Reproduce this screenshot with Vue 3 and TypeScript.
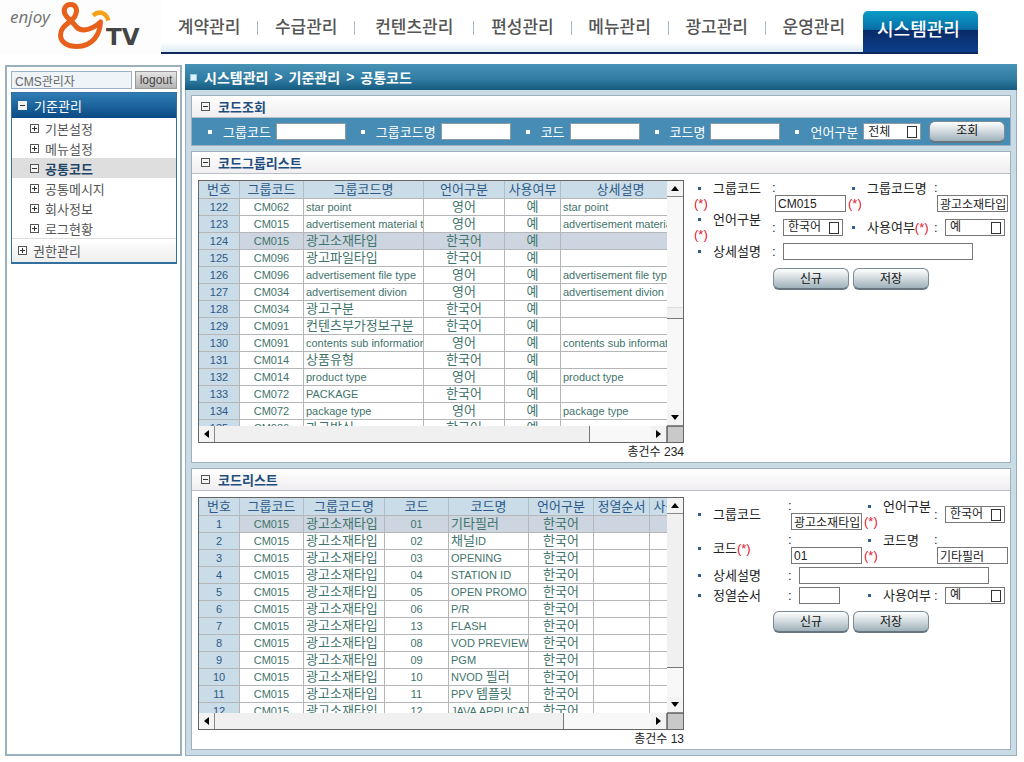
<script setup lang="ts">
import { reactive, ref } from 'vue'

interface Column { title: string; width: number; align: 'center' | 'left' }
interface Grid { columns: Column[]; rows: string[][]; selected: number }

const menus = ['계약관리', '수급관리', '컨텐츠관리', '편성관리', '메뉴관리', '광고관리', '운영관리', '시스템관리']
const sideItems = ['기본설정', '메뉴설정', '공통코드', '공통메시지', '회사정보', '로그현황']
const path = ['시스템관리', '기준관리', '공통코드']
const user = ref('CMS관리자')

const searchFields = reactive([
  { id: 's-group', label: '그룹코드', value: '' },
  { id: 's-group-name', label: '그룹코드명', value: '' },
  { id: 's-code', label: '코드', value: '' },
  { id: 's-code-name', label: '코드명', value: '' },
])

const groupForm = reactive({ code: 'CM015', name: '광고소재타입', desc: '' })
const codeForm = reactive({ group: '광고소재타입', code: '01', name: '기타필러', desc: '', order: '' })

const groups: Grid = {
  selected: 2,
  columns: [
    { title: '번호', width: 41, align: 'center' },
    { title: '그룹코드', width: 64, align: 'center' },
    { title: '그룹코드명', width: 120, align: 'left' },
    { title: '언어구분', width: 81, align: 'center' },
    { title: '사용여부', width: 56, align: 'center' },
    { title: '상세설명', width: 120, align: 'left' },
  ],
  rows: [
    ['122', 'CM062', 'star point', '영어', '예', 'star point'],
    ['123', 'CM015', 'advertisement material type', '영어', '예', 'advertisement material type'],
    ['124', 'CM015', '광고소재타입', '한국어', '예', ''],
    ['125', 'CM096', '광고파일타입', '한국어', '예', ''],
    ['126', 'CM096', 'advertisement file type', '영어', '예', 'advertisement file type'],
    ['127', 'CM034', 'advertisement divion', '영어', '예', 'advertisement divion'],
    ['128', 'CM034', '광고구분', '한국어', '예', ''],
    ['129', 'CM091', '컨텐츠부가정보구분', '한국어', '예', ''],
    ['130', 'CM091', 'contents sub information', '영어', '예', 'contents sub information'],
    ['131', 'CM014', '상품유형', '한국어', '예', ''],
    ['132', 'CM014', 'product type', '영어', '예', 'product type'],
    ['133', 'CM072', 'PACKAGE', '한국어', '예', ''],
    ['134', 'CM072', 'package type', '영어', '예', 'package type'],
    ['135', 'CM086', '과금방식', '한국어', '예', ''],
  ],
}

const codeNames: [string, string][] = [
  ['01', '기타필러'], ['02', '채널ID'], ['03', 'OPENING'], ['04', 'STATION ID'],
  ['05', 'OPEN PROMO'], ['06', 'P/R'], ['13', 'FLASH'], ['08', 'VOD PREVIEW'],
  ['09', 'PGM'], ['10', 'NVOD 필러'], ['11', 'PPV 템플릿'], ['12', 'JAVA APPLICATION'],
]
const codes: Grid = {
  selected: 0,
  columns: [
    { title: '번호', width: 41, align: 'center' },
    { title: '그룹코드', width: 64, align: 'center' },
    { title: '그룹코드명', width: 81, align: 'left' },
    { title: '코드', width: 64, align: 'center' },
    { title: '코드명', width: 80, align: 'left' },
    { title: '언어구분', width: 65, align: 'center' },
    { title: '정열순서', width: 56, align: 'center' },
    { title: '사용여부', width: 56, align: 'center' },
  ],
  rows: codeNames.map(([code, name], i) => [String(i + 1), 'CM015', '광고소재타입', code, name, '한국어', '', '']),
}

const lists = [
  { key: 'group', title: '코드그룹리스트', grid: groups, total: 234 },
  { key: 'code', title: '코드리스트', grid: codes, total: 13 },
]

// Hangul runs are set a little larger than Latin runs inside grid cells.
function runs(text: string): { text: string; ko: boolean }[] {
  return (text.match(/[가-힣]+|[^가-힣]+/g) ?? []).map(t => ({ text: t, ko: /[가-힣]/.test(t) }))
}
</script>

<template>
  <div class="page">
    <header class="top">
      <a class="logo" href="#" aria-label="enjoy TV">
        <svg width="161" height="54" viewBox="0 0 161 54">
          <text x="10" y="23" class="logo-enjoy">enjoy</text>
          <path d="M100.500 22C100 35 92 46.500 77 46.500C67 46.500 60.500 42 60.500 35C60.500 26 70 23 74.500 17C78.500 10 76 4.500 70.500 4.500C65 4.500 62.500 10 65.500 15C68 19 73 22 76.500 27C82 33 93 29 100.500 22Z" fill="none" stroke="#e8611c" stroke-width="5" stroke-linejoin="round" />
          <path d="M93 15.500C99 10.500 105.500 12 108.500 20.500" fill="none" stroke="#f5a21b" stroke-width="4.500" />
          <text x="106" y="45" class="logo-tv">TV</text>
        </svg>
      </a>
      <nav class="menu">
        <a v-for="(m, i) in menus" :key="m" href="#" :class="{ active: i === 7 }"><span>{{ m }}</span></a>
      </nav>
    </header>

    <div class="body">
      <aside class="side">
        <div class="login">
          <input v-model="user" type="text" aria-label="사용자" />
          <button type="button">logout</button>
        </div>
        <div class="tree">
          <a class="tree-head" href="#"><i class="box minus"></i>기준관리</a>
          <ul>
            <li v-for="(s, i) in sideItems" :key="s">
              <a href="#" :class="{ on: i === 2 }"><i class="box" :class="{ minus: i === 2 }"></i>{{ s }}</a>
            </li>
          </ul>
          <a class="tree-foot" href="#"><i class="box"></i>권한관리</a>
        </div>
      </aside>

      <main class="main">
        <h1 class="title">
          <i></i>
          <template v-for="(p, i) in path" :key="p"><span v-if="i">&gt;</span><span>{{ p }}</span></template>
        </h1>
        <div class="content">
          <section class="panel">
            <h2><i class="box minus"></i>코드조회</h2>
            <form class="search" @submit.prevent>
              <div v-for="f in searchFields" :key="f.id" class="sfield">
                <i class="dot"></i><label :for="f.id">{{ f.label }}</label>
                <input :id="f.id" v-model="f.value" type="text" />
              </div>
              <div class="sfield">
                <i class="dot"></i><label for="s-lang">언어구분</label>
                <span class="pick"><select id="s-lang"><option>전체</option></select></span>
              </div>
              <button type="submit" class="btn">조회</button>
            </form>
          </section>

          <section v-for="l in lists" :key="l.key" class="panel">
            <h2><i class="box minus"></i>{{ l.title }}</h2>
            <div class="split">
              <div class="list">
                <div class="grid" :class="l.key">
                  <div class="view">
                    <table>
                      <colgroup><col v-for="c in l.grid.columns" :key="c.title" :style="{ width: c.width + 'px' }" /></colgroup>
                      <thead><tr><th v-for="c in l.grid.columns" :key="c.title" scope="col">{{ c.title }}</th></tr></thead>
                      <tbody>
                        <tr v-for="(r, ri) in l.grid.rows" :key="ri" :class="{ current: ri === l.grid.selected }">
                          <td v-for="(t, ci) in r" :key="ci" :class="[l.grid.columns[ci].align, { no: ci === 0 }]">
                            <div><span v-for="(s, si) in runs(t)" :key="si" :class="{ ko: s.ko }">{{ s.text }}</span></div>
                          </td>
                        </tr>
                      </tbody>
                    </table>
                  </div>
                  <div class="vbar">
                    <button type="button" aria-label="위로"><svg width="8" height="5"><path d="M0 5L4 0L8 5Z" /></svg></button>
                    <div class="track"><div class="thumb"></div></div>
                    <button type="button" aria-label="아래로"><svg width="8" height="5"><path d="M0 0L4 5L8 0Z" /></svg></button>
                  </div>
                  <div class="hbar">
                    <button type="button" aria-label="왼쪽"><svg width="5" height="8"><path d="M5 0L0 4L5 8Z" /></svg></button>
                    <div class="track"><div class="thumb"></div></div>
                    <button type="button" aria-label="오른쪽"><svg width="5" height="8"><path d="M0 0L5 4L0 8Z" /></svg></button>
                  </div>
                  <div class="corner"></div>
                </div>
                <p class="total">총건수 {{ l.total }}</p>
              </div>

              <form v-if="l.key === 'group'" class="edit edit-group" @submit.prevent>
                <label class="lab" for="g-code">그룹코드<em class="below">(*)</em></label>
                <div class="val stack"><b>:</b><input id="g-code" v-model="groupForm.code" type="text" /></div>
                <label class="lab" for="g-name">그룹코드명<em class="below">(*)</em></label>
                <div class="val stack"><b>:</b><input id="g-name" v-model="groupForm.name" type="text" /></div>

                <label class="lab" for="g-lang">언어구분<em class="below">(*)</em></label>
                <div class="val"><b>:</b><span class="pick framed"><select id="g-lang"><option>한국어</option></select></span></div>
                <label class="lab" for="g-use">사용여부<em>(*)</em></label>
                <div class="val"><b>:</b><span class="pick framed"><select id="g-use"><option>예</option></select></span></div>

                <label class="lab" for="g-desc">상세설명</label>
                <div class="val wide"><b>:</b><input id="g-desc" v-model="groupForm.desc" type="text" class="long" /></div>
                <div class="actions"><button type="button" class="btn">신규</button><button type="submit" class="btn">저장</button></div>
              </form>

              <form v-else class="edit edit-code" @submit.prevent>
                <label class="lab" for="c-group">그룹코드</label>
                <div class="val stack"><b>:</b><input id="c-group" v-model="codeForm.group" type="text" /></div>
                <label class="lab" for="c-lang">언어구분<em class="below">(*)</em></label>
                <div class="val"><b>:</b><span class="pick framed"><select id="c-lang"><option>한국어</option></select></span></div>

                <label class="lab" for="c-code">코드<em>(*)</em></label>
                <div class="val stack"><b>:</b><input id="c-code" v-model="codeForm.code" type="text" /></div>
                <label class="lab" for="c-name">코드명<em class="below">(*)</em></label>
                <div class="val stack"><b>:</b><input id="c-name" v-model="codeForm.name" type="text" /></div>

                <label class="lab" for="c-desc">상세설명</label>
                <div class="val wide"><b>:</b><input id="c-desc" v-model="codeForm.desc" type="text" class="long" /></div>

                <label class="lab" for="c-order">정열순서</label>
                <div class="val"><b>:</b><input id="c-order" v-model="codeForm.order" type="text" class="short" /></div>
                <label class="lab" for="c-use">사용여부</label>
                <div class="val"><b>:</b><span class="pick framed"><select id="c-use"><option>예</option></select></span></div>
                <div class="actions"><button type="button" class="btn">신규</button><button type="submit" class="btn">저장</button></div>
              </form>
            </div>
          </section>
        </div>
      </main>
    </div>
  </div>
</template>

<style>
body { background: #fff; }
</style>

<style scoped>
* { box-sizing: border-box; }
.page, .page input, .page button, .page select {
  font-family: "Liberation Sans", "Noto Sans CJK KR", sans-serif;
}
.page {
  display: flex;
  flex-direction: column;
  min-height: 100vh;
  font-size: 13px;
  color: #222;
}
a { color: inherit; text-decoration: none; }
ul, h1, h2, p { margin: 0; padding: 0; }
ul { list-style: none; }
input, select, button { margin: 0; border-radius: 0; }

.top { display: flex; height: 54px; background: #fff; }
.logo { flex: none; background: #fdfdfd; }
.logo svg { display: block; }
.logo-enjoy { font: italic 17px "Noto Sans", sans-serif; fill: #777; }
.logo-tv { font: bold 23px "DejaVu Sans", sans-serif; fill: #444; }
.menu {
  flex: 1;
  display: grid;
  grid-template-columns: 97fr 97fr 119fr 97fr 97fr 97fr 97fr 115fr;
  margin-right: 46px;
  border-bottom: 2px solid #12285a;
  background: linear-gradient(#fff 42px, #dcebf3);
}
.menu a {
  display: flex;
  align-items: center;
  justify-content: center;
  padding-top: 3px;
  font-size: 17px;
  font-weight: 500;
  color: #555;
  white-space: nowrap;
}
.menu a span { width: 100%; line-height: 14px; text-align: center; border-right: 1px solid #a3bccb; }
.menu a:nth-child(7) span { border-right-color: transparent; }
.menu a.active {
  margin-top: 11px;
  padding: 0 4px 4px 0;
  font-size: 18px;
  color: #fff;
  border-radius: 5px 5px 0 0;
  background: linear-gradient(#0b9cc8, #086fa6 45%, #0a2a66 46%, #0b3f8c);
}
.menu a.active span { border: 0; }

.body { flex: 1; display: flex; gap: 3px; padding: 10px 7px 6px 5px; }
.side { flex: 0 0 177px; min-width: 0; margin-top: 1px; padding: 4px 3px; border: 2px solid #9bb0bd; background: #fff; }
.login { display: flex; gap: 3px; height: 18px; margin: 0 0 3px 1px; }
.login input {
  flex: 1;
  min-width: 0;
  padding: 0 3px;
  font-size: 12px;
  color: #666;
  border: 1px solid #9db1c4;
  background: #eff4f9;
}
.login button {
  width: 42px;
  padding: 0;
  font-size: 12px;
  color: #444;
  border: 1px solid #999;
  background: linear-gradient(#e4e4e4, #b4b4b4);
}
.tree { margin-left: 1px; border: 1px solid #33709e; border-bottom-width: 2px; color: #555; }
.tree a { display: flex; align-items: center; }
.tree-head { height: 25px; padding-left: 6px; gap: 7px; color: #fff; background: linear-gradient(#2f7db4, #0b4a85); }
.tree li a { height: 20px; padding-left: 18px; gap: 6px; }
.tree li a.on { font-weight: bold; color: #1f4566; background: #dedede; }
.tree-foot { height: 24px; padding-left: 6px; gap: 6px; border-top: 1px solid #ddd; background: linear-gradient(#fff, #efeeef); }

.box {
  flex: none;
  width: 9px;
  height: 9px;
  border: 1px solid #555;
  background:
    linear-gradient(#333, #333) center / 5px 1px no-repeat,
    linear-gradient(#333, #333) center / 1px 5px no-repeat,
    #fff;
}
.box.minus { background: linear-gradient(#333, #333) center / 5px 1px no-repeat, #f4f4f4; }
.tree-head .box { border-color: #eee; }

.main { flex: 1; min-width: 0; display: flex; flex-direction: column; }
.title {
  display: flex;
  align-items: center;
  gap: 6px;
  height: 26px;
  padding-left: 5px;
  font-size: 14px;
  font-weight: bold;
  color: #fff;
  background: linear-gradient(#4693b5, #2f7ba2 60%, #155a7d);
}
.title i { width: 7px; height: 7px; margin-right: 1px; background: #dff0f8; border: 1px solid #9ccbe0; }
.content {
  flex: 1;
  display: flex;
  flex-direction: column;
  gap: 5px;
  padding: 5px;
  border: 1px solid #98adb9;
  border-top: 0;
  background: #c9dce6;
}
.panel { border: 1px solid #9fb1bc; background: #fff; }
.panel:last-child { flex: 1; }
h2 {
  display: flex;
  align-items: center;
  gap: 8px;
  height: 22px;
  padding-left: 9px;
  font-size: 13px;
  color: #1e4d7e;
  border-bottom: 1px solid #b9bfc4;
  background: linear-gradient(#fff, #f0eef0);
}
.search { display: flex; align-items: center; height: 27px; padding: 0 5px 0 16px; background: #468cb4; color: #fff; }
.sfield { display: flex; align-items: center; margin-right: 15px; white-space: nowrap; }
.sfield:last-of-type { margin-right: 8px; }
.sfield label { padding: 0 5px 0 11px; }
.dot { width: 4px; height: 4px; background: #fff; }
.search input { width: 70px; height: 17px; padding: 0 3px; font-size: 12px; border: 1px solid #8d99a3; background: #fff; }
.pick { position: relative; display: block; width: 58px; height: 17px; }
.pick::after { content: ""; position: absolute; right: 4px; top: 3px; width: 8px; height: 10px; border: 1px solid #333; pointer-events: none; }
.pick select {
  display: block;
  width: 100%;
  height: 100%;
  padding: 0 4px;
  font-size: 12px;
  color: #222;
  border: 1px solid #8d99a3;
  background: #fff;
  appearance: none;
}
.btn {
  flex: none;
  width: 76px;
  height: 22px;
  padding: 0;
  font-size: 12px;
  line-height: 18px;
  color: #111;
  border: 1px solid #7c8a94;
  border-bottom: 2px solid #66757f;
  border-radius: 6px;
  background: linear-gradient(#fff, #d5dde1 45%, #9eb1ba);
}
.search .btn { margin-left: auto; }

.split { display: flex; padding: 6px 2px 0 6px; }
.list { flex: 0 0 486px; min-width: 0; }
.grid {
  display: grid;
  grid-template: 245px 16px / minmax(0, 1fr) 16px;
  border: 1px solid #666;
}
.grid.code { grid-template-rows: 215px 16px; }
.view { overflow: hidden; }
table { table-layout: fixed; width: 482px; border-collapse: separate; border-spacing: 0; font-size: 11px; color: #3f746c; }
.code table { width: 507px; }
th, td { padding: 0; white-space: nowrap; overflow: hidden; border-right: 1px solid #b4b6b8; border-bottom: 1px solid #b4b6b8; }
th { height: 18px; font-size: 13px; font-weight: normal; line-height: 17px; color: #2d5a88; background: #c9dce7; border-right-color: #aebfca; }
td { height: 17px; text-align: center; }
td div { height: 16px; line-height: 16px; overflow: hidden; }
td.left { padding-left: 2px; text-align: left; }
td.no { color: #2d5a88; background: #c9dce7; }
tr.current td { background: #ccd5e0; }
tr.current td.no { background: #c9dce7; }
.ko { font-size: 13px; }
.vbar { display: flex; flex-direction: column; }
.hbar { display: flex; }
.vbar button, .hbar button {
  flex: none;
  display: flex;
  align-items: center;
  justify-content: center;
  width: 16px;
  height: 16px;
  padding: 0;
  border: 0;
  border-right: 1px solid #888;
  border-bottom: 1px solid #888;
  background: #f3f3f3;
}
.vbar button { border-right: 0; }
.hbar button { border-bottom: 0; }
.track { flex: 1; display: flex; background: #f8f8f8; }
.vbar .track { flex-direction: column; }
.thumb { background: #f0f0f0; }
.vbar .thumb { height: 84%; border-bottom: 1px solid #777; }
.hbar .thumb { width: 80%; border-right: 1px solid #777; }
.group .vbar .thumb { height: 12px; margin-top: 110px; border-top: 1px solid #ddd; }
.group .hbar .thumb { width: 86%; }
.corner { background: #c9c9c9; border-left: 1px solid #777; border-top: 1px solid #777; }
.total { height: 19px; line-height: 18px; font-size: 12px; text-align: right; }

.edit { flex: 1; min-width: 0; display: grid; align-content: start; align-items: center; padding-left: 10px; }
.edit-group { grid-template: 32px 30px 18px / 76px 78px 84px 1fr; }
.edit-code { grid-template: 34px 34px 20px 20px / 92px 78px 68px 1fr; }
.lab { position: relative; padding-left: 19px; line-height: 15px; white-space: nowrap; }
.lab::before { content: ""; position: absolute; left: 4px; top: 6px; width: 3px; height: 3px; background: #2f5f8f; }
.lab em { font-style: normal; color: #e02030; }
.lab em.below { display: block; margin-left: -19px; }
.val { display: flex; align-items: center; padding-left: 2px; }
.val.stack { display: block; }
.val.wide { grid-column: 2 / -1; }
.val b { display: block; width: 11px; line-height: 15px; font-weight: normal; }
.val input { width: 70px; height: 17px; padding: 0 2px; font-size: 12px; color: #222; border: 1px solid #777; background: #fff; }
.val.stack input { display: block; margin-left: 3px; width: 71px; }
.val input.long { width: 190px; }
.val input.short { width: 41px; }
.pick.framed { width: 60px; }
.pick.framed select { border-color: #777; }
.actions { grid-column: 1 / -1; display: flex; gap: 4px; padding: 8px 0 0 79px; }
.edit-code .actions { padding-top: 6px; }
</style>
